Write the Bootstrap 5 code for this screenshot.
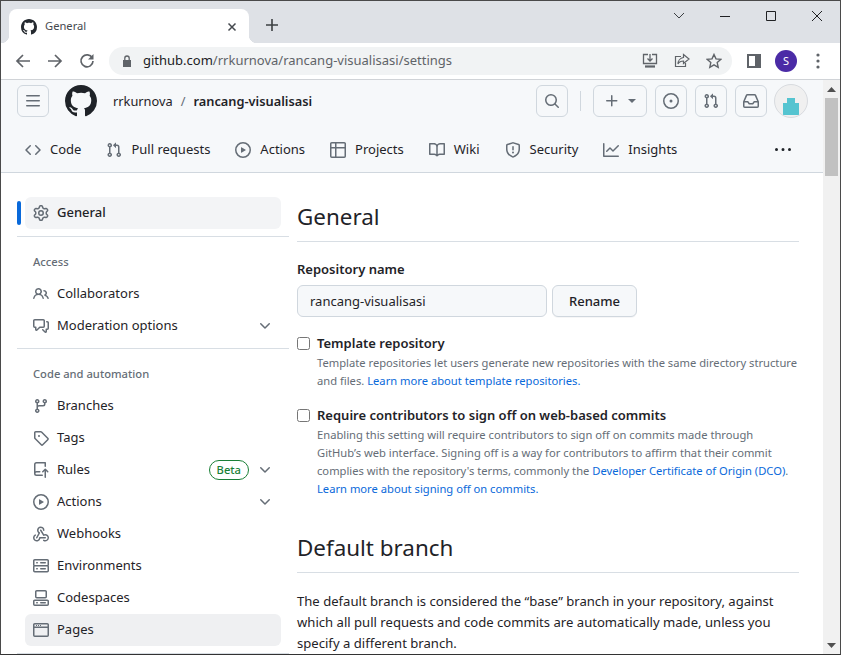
<!DOCTYPE html>
<html lang="en">
<head>
<meta charset="utf-8">
<title>General</title>
<link href="https://cdn.jsdelivr.net/npm/bootstrap@5.3.0/dist/css/bootstrap.min.css" rel="stylesheet">
<style>
html,body{height:100%;overflow:hidden;background:#fff}
body{font-family:"Noto Sans","Liberation Sans",sans-serif;font-size:13px;color:#1f2328}
svg{display:block;flex:none}
.oct{width:16px;height:16px;fill:#656d76}
.win{height:655px;display:flex;flex-direction:column;border:1px solid #4a4a4a;border-bottom-color:#333;overflow:hidden}
.strip{height:42px;background:#dee1e6;display:flex;flex:none;padding:8px 0 0 8px}
.chrome-tab{width:240px;height:34px;background:#fff;border-radius:8px 8px 0 0;display:flex;align-items:center;padding:1px 12px 0;position:relative;font-size:11.2px;color:#45494e}
.chrome-tab::before,.chrome-tab::after{content:"";position:absolute;bottom:0;width:8px;height:8px}
.chrome-tab::before{left:-8px;background:radial-gradient(circle at 0 0,#dee1e6 8px,#fff 8.5px)}
.chrome-tab::after{right:-8px;background:radial-gradient(circle at 100% 0,#dee1e6 8px,#fff 8.5px)}
.newtab{margin-left:16px;margin-top:9px}
.winctl{margin-left:auto;display:flex;align-items:flex-start;margin-top:-8px}
.winbtn{width:46px;height:30px;display:flex;align-items:center;justify-content:center}
.toolbar{height:36px;flex:none;display:flex;align-items:center;padding:0 0 0 6px}
.tb-ic{width:32px;display:flex;justify-content:center}
.omni{width:623px;height:28px;margin-left:6px;background:#f1f3f4;border-radius:14px;display:flex;align-items:center;padding-left:13px;font-size:13px;color:#5f6368}
.omni b{font-weight:400;color:#202124}
.omni-url{margin-left:11px}
.omni-r{margin-left:auto;display:flex;gap:16px;padding-right:10px}
.tb-right{display:flex;align-items:center;margin-left:15px}
.prof{width:22px;height:22px;border-radius:50%;background:#4b2ba6;color:#fff;font-size:11px;display:flex;align-items:center;justify-content:center;margin-left:14px;margin-right:19px}
.sep{height:1px;background:#d0d3d7;flex:none}
.viewport{flex:1;min-height:0;display:flex}
.page{flex:1;min-width:0;overflow:hidden}
.sbar{width:17px;flex:none;background:#f1f1f1;display:flex;flex-direction:column;align-items:center}
.sbar-up{height:18px;display:flex;align-items:center;justify-content:center}
.sbar-thumb{height:78px;width:13px;background:#c1c1c1}
.sbar-dn{margin-top:auto;height:18px;display:flex;align-items:center;justify-content:center}
.ghead{background:#f6f8fa;border-bottom:1px solid #d0d7de;height:93px;flex:none;padding:5px 15px 0 16px}
.gtop{height:32px;display:flex;align-items:center}
.hbtn{width:32px;height:32px;padding:0;border:1px solid #d0d7de;border-radius:6px;background:transparent;display:flex;align-items:center;justify-content:center}
.logo{width:32px;height:32px;fill:#1f2328;margin:0 16px}
.crumb{color:#656d76;font-size:12.8px;padding-top:1px}
.crumb-own{color:#1f2328}
.crumb-repo{font-weight:600;color:#1f2328}
.vbar{width:1px;height:20px;background:#d0d7de;margin:0 12px}
.caret{width:0;height:0;border:4px solid transparent;border-top-color:#656d76;border-bottom:0;margin-left:8px}
.avatar{width:34px;height:34px;border-radius:50%;border:1px solid #d8dbdf;background:#f0f0f0;overflow:hidden;margin-left:7px}
.gtabs{height:32px;margin-top:17px;display:flex;align-items:center}
.gtab{display:flex;align-items:center;gap:9px;color:#1f2328;text-decoration:none;padding:0 8px;margin-right:9px}
.gkebab{fill:#1f2328;margin-left:auto;margin-right:17px}
.gmain{display:flex;padding:24px 0 0 16px}
.side{width:272px;flex:none}
.side-item{height:32px;display:flex;align-items:center;gap:8px;padding:0 8px;margin-left:8px;width:256px;border-radius:6px;color:#1f2328;text-decoration:none;font-size:13px}
.side-on{background:#f3f4f6;font-weight:500;position:relative}
.side-on::before{content:"";position:absolute;left:-8px;top:4px;width:4px;height:24px;background:#0969da;border-radius:6px}
.side-hl{background:#eff0f2}
.side-chev{margin-left:auto}
.side-head{font-size:11.2px;font-weight:500;color:#656d76;height:18px;line-height:18px;padding-left:16px;margin:16px 0 7px 0}
.side-div{height:1px;background:#d8dee4;margin-top:7px}
.side-div-b{margin-top:6px}
.beta{margin-left:auto;border:1px solid #1a7f37;color:#1a7f37;background:transparent;font-weight:500;font-size:11.2px;height:20px;padding:0 7px;line-height:18px;border-radius:2em}
.content{width:502px;margin-left:8px;flex:none}
.h-sec{font-size:22.4px;font-weight:400;line-height:30px;margin:5px 0 0;padding-bottom:9px;border-bottom:1px solid #d8dee4}
.h-next{margin-top:35px}
.rlabel{font-weight:600;font-size:13px;display:block;line-height:20px;margin:17px 0 6px}
.rname{width:250px;height:32px;background:#f6f8fa;border:1px solid #d0d7de;border-radius:6px;font-size:13px;padding:0 12px;color:#1f2328}
.rbtn{width:85px;height:32px;padding:2px 0 0;background:#f6f8fa;border:1px solid #d0d7de;border-radius:6px;font-weight:500;font-size:13px;color:#1f2328;box-shadow:0 1px 0 rgba(31,35,40,.04);margin-left:5px}
.chk{display:flex;align-items:flex-start;gap:7px}
.chk input{width:13px;height:13px;margin:4px 0 0;border:1px solid #767676;border-radius:2.5px;flex:none;background:#fff}
.chk-a{margin-top:16px}
.chk-b{margin-top:15px}
.chk-t{font-weight:600;font-size:13px;line-height:20px;display:block}
.chk-d{font-size:11.2px;color:#656d76;line-height:18px;margin:1px 0 0;display:block}
.chk-d a{color:#0969da;text-decoration:none}
.pbody{font-size:13.1px;line-height:21px;margin:18px 0 0}
</style>
</head>
<body>
<div class="win">
  <div class="strip">
    <div class="chrome-tab">
      <svg class="oct me-2" viewBox="0 0 16 16"><path fill="#24292f" d="M8 0c4.42 0 8 3.58 8 8a8.013 8.013 0 0 1-5.45 7.59c-.4.08-.55-.17-.55-.38 0-.27.01-1.13.01-2.2 0-.75-.25-1.23-.54-1.48 1.78-.2 3.65-.88 3.65-3.95 0-.88-.31-1.59-.82-2.15.08-.2.36-1.02-.08-2.12 0 0-.67-.22-2.2.82-.64-.18-1.32-.27-2-.27-.68 0-1.36.09-2 .27-1.53-1.03-2.2-.82-2.2-.82-.44 1.1-.16 1.92-.08 2.12-.51.56-.82 1.28-.82 2.15 0 3.06 1.86 3.75 3.64 3.95-.23.2-.44.55-.51 1.07-.46.21-1.61.55-2.33-.66-.15-.24-.6-.83-1.23-.82-.67.01-.27.38.01.53.34.19.73.9.82 1.13.16.45.68 1.31 2.69.94 0 .67.01 1.3.01 1.49 0 .21-.15.45-.55.38A7.995 7.995 0 0 1 0 8c0-4.42 3.58-8 8-8Z"/></svg>
      <span>General</span>
      <svg class="ms-auto" width="10" height="10" viewBox="0 0 10 10" fill="none" stroke="#45494e" stroke-width="1.5"><path d="M1.5 1.5l7 7M8.5 1.5l-7 7"/></svg>
    </div>
    <svg class="newtab" width="14" height="14" viewBox="0 0 14 14" fill="none" stroke="#3c4043" stroke-width="1.6"><path d="M7 1v12M1 7h12"/></svg>
    <div class="winctl">
      <div class="winbtn"><svg width="12" height="8" viewBox="0 0 12 8" fill="none" stroke="#3c4043"><path d="M1 1l5 5 5-5"/></svg></div>
      <div class="winbtn"><svg width="10" height="1" viewBox="0 0 10 1"><path d="M0 0h10v1H0z" fill="#202124"/></svg></div>
      <div class="winbtn"><svg width="10" height="10" viewBox="0 0 10 10" fill="none" stroke="#202124"><path d="M.5.5h9v9h-9z"/></svg></div>
      <div class="winbtn"><svg width="10" height="10" viewBox="0 0 10 10" fill="none" stroke="#202124"><path d="M0 0l10 10M10 0L0 10"/></svg></div>
    </div>
  </div>
  <div class="toolbar">
    <div class="tb-ic"><svg width="16" height="16" viewBox="0 0 16 16" fill="none" stroke="#5f6368" stroke-width="1.7"><path d="M15 8H2M8 2L2 8l6 6"/></svg></div>
    <div class="tb-ic"><svg width="16" height="16" viewBox="0 0 16 16" fill="none" stroke="#5f6368" stroke-width="1.7"><path d="M1 8h13M8 2l6 6-6 6"/></svg></div>
    <div class="tb-ic"><svg width="16" height="16" viewBox="0 0 16 16" fill="none" stroke="#5f6368" stroke-width="1.7"><path d="M13.3 5A6 6 0 1 0 14 8"/><path d="M14.5 1v5.500H9z" stroke="none" fill="#5f6368"/></svg></div>
    <div class="omni">
      <svg width="10" height="12" viewBox="0 0 10 12" fill="#5f6368"><path d="M1 5h8v7H1z"/><path d="M2.8 5V3.2a2.200 2.200 0 0 1 4.400 0V5" fill="none" stroke="#5f6368" stroke-width="1.3"/></svg>
      <span class="omni-url"><b>github.com</b>/rrkurnova/rancang-visualisasi/settings</span>
      <div class="omni-r">
        <svg width="16" height="16" viewBox="0 0 16 16" fill="none" stroke="#5f6368" stroke-width="1.3"><path d="M6 1.500H1.500v9h13v-9H10"/><path d="M8 1v7M5.500 5.500L8 8l2.500-2.500"/><path d="M3 13.500h10" stroke-width="2.2"/></svg>
        <svg width="16" height="16" viewBox="0 0 16 16" fill="none" stroke="#5f6368" stroke-width="1.2"><path d="M7 3.500H1.500v10h10V10"/><path d="M9.500 1.500L15 6l-5.500 4.500V8C7 8 5 9 4 11c0-3 2-6 5.500-6.500z"/></svg>
        <svg width="16" height="16" viewBox="0 0 16 16" fill="none" stroke="#5f6368" stroke-width="1.4"><path d="M8 1.500l2 4.400 4.700.5-3.500 3.200 1 4.700L8 11.900l-4.200 2.400 1-4.700L1.300 6.400 6 5.900z"/></svg>
      </div>
    </div>
    <div class="tb-right">
      <svg width="14" height="14" viewBox="0 0 14 14"><path d="M0 0h14v14H0z" fill="#5f6368"/><path d="M2 2h6v10H2z" fill="#fff"/></svg>
      <div class="prof">S</div>
      <svg width="4" height="16" viewBox="0 0 4 16" fill="#5f6368"><circle cx="2" cy="2" r="1.6"/><circle cx="2" cy="8" r="1.6"/><circle cx="2" cy="14" r="1.6"/></svg>
    </div>
  </div>
  <div class="sep"></div>
  <div class="viewport">
    <div class="page">
      <header class="ghead">
        <div class="gtop">
          <button class="hbtn" type="button"><svg class="oct" viewBox="0 0 16 16"><path d="M1 2.750A.75.75 0 0 1 1.750 2h12.500a.75.75 0 0 1 0 1.500H1.750A.75.75 0 0 1 1 2.750Zm0 5A.75.75 0 0 1 1.750 7h12.500a.75.75 0 0 1 0 1.500H1.750A.75.75 0 0 1 1 7.750ZM1.750 12h12.500a.75.75 0 0 1 0 1.500H1.750a.75.75 0 0 1 0-1.500Z"/></svg></button>
          <svg class="logo" viewBox="0 0 16 16"><path d="M8 0c4.420 0 8 3.580 8 8a8.013 8.013 0 0 1-5.450 7.590c-.4.08-.55-.17-.55-.38 0-.27.01-1.130.01-2.200 0-.75-.25-1.230-.54-1.480 1.780-.2 3.650-.88 3.650-3.950 0-.88-.31-1.590-.82-2.150.08-.2.36-1.020-.08-2.120 0 0-.67-.22-2.200.82-.64-.18-1.320-.27-2-.27-.68 0-1.360.09-2 .27-1.530-1.030-2.200-.82-2.200-.82-.44 1.100-.16 1.920-.08 2.120-.51.56-.82 1.280-.82 2.150 0 3.060 1.860 3.750 3.640 3.950-.23.2-.44.55-.51 1.070-.46.21-1.610.55-2.330-.66-.15-.24-.6-.83-1.230-.82-.67.01-.27.38.01.53.34.19.73.9.82 1.130.16.45.68 1.310 2.690.94 0 .67.01 1.300.01 1.490 0 .21-.15.45-.55.38A7.995 7.995 0 0 1 0 8c0-4.420 3.580-8 8-8Z"/></svg>
          <span class="crumb crumb-own">rrkurnova</span><span class="crumb mx-2">/</span><span class="crumb crumb-repo">rancang-visualisasi</span>
          <button class="hbtn ms-auto" type="button"><svg class="oct" viewBox="0 0 16 16"><path d="M10.680 11.740a6 6 0 0 1-7.922-8.982 6 6 0 0 1 8.982 7.922l3.040 3.040a.749.749 0 0 1-.326 1.275.749.749 0 0 1-.734-.215ZM11.500 7a4.499 4.499 0 1 0-8.997 0A4.499 4.499 0 0 0 11.500 7Z"/></svg></button>
          <div class="vbar"></div>
          <button class="hbtn" style="width:54px" type="button"><svg class="oct" viewBox="0 0 16 16"><path d="M7.750 2a.75.75 0 0 1 .75.75V7h4.250a.75.75 0 0 1 0 1.500H8.500v4.250a.75.75 0 0 1-1.500 0V8.500H2.750a.75.75 0 0 1 0-1.500H7V2.750A.75.75 0 0 1 7.750 2Z"/></svg><span class="caret"></span></button>
          <button class="hbtn ms-2" type="button"><svg class="oct" viewBox="0 0 16 16"><path d="M8 9.500a1.500 1.500 0 1 0 0-3 1.500 1.500 0 0 0 0 3Z"/><path d="M8 0a8 8 0 1 1 0 16A8 8 0 0 1 8 0ZM1.500 8a6.500 6.500 0 1 0 13 0 6.500 6.500 0 0 0-13 0Z"/></svg></button>
          <button class="hbtn ms-2" type="button"><svg class="oct" viewBox="0 0 16 16"><path d="M1.500 3.250a2.250 2.250 0 1 1 3 2.122v5.256a2.251 2.251 0 1 1-1.500 0V5.372A2.250 2.250 0 0 1 1.500 3.250Zm5.677-.177L9.573.677A.25.25 0 0 1 10 .854V2.500h1A2.500 2.500 0 0 1 13.500 5v5.628a2.251 2.251 0 1 1-1.500 0V5a1 1 0 0 0-1-1h-1v1.646a.25.25 0 0 1-.427.177L7.177 3.427a.25.25 0 0 1 0-.354ZM3.750 2.500a.75.75 0 1 0 0 1.500.75.75 0 0 0 0-1.500Zm0 9.500a.75.75 0 1 0 0 1.500.75.75 0 0 0 0-1.500Zm8.250.75a.75.75 0 1 0 1.500 0 .75.75 0 0 0-1.500 0Z"/></svg></button>
          <button class="hbtn ms-2" type="button"><svg class="oct" viewBox="0 0 16 16"><path d="M2.800 2.060A1.750 1.750 0 0 1 4.410 1h7.180c.7 0 1.333.417 1.610 1.060l2.740 6.395c.04.093.06.194.06.295v4.500A1.750 1.750 0 0 1 14.250 15H1.750A1.750 1.750 0 0 1 0 13.250v-4.500c0-.101.02-.202.06-.295Zm1.610.44a.25.25 0 0 0-.23.152L1.887 8H4.750a.75.75 0 0 1 .6.3L6.625 10h2.750l1.275-1.700a.75.75 0 0 1 .6-.3h2.863L11.820 2.652a.25.25 0 0 0-.23-.152Zm10.090 7h-2.875l-1.275 1.700a.75.75 0 0 1-.6.3h-3.500a.75.75 0 0 1-.6-.3L4.375 9.500H1.500v3.750c0 .138.112.25.25.25h12.500a.25.25 0 0 0 .25-.25Z"/></svg></button>
          <div class="avatar"><svg width="32" height="32" viewBox="0 0 32 32"><path d="M12 13h8v5h4v12H8V18h4z" fill="#55c4d0"/></svg></div>
        </div>
        <nav class="gtabs">
          <a class="gtab" href="#"><svg class="oct" viewBox="0 0 16 16"><path d="m11.280 3.220 4.250 4.250a.75.75 0 0 1 0 1.060l-4.250 4.250a.749.749 0 0 1-1.275-.326.749.749 0 0 1 .215-.734L13.940 8l-3.720-3.720a.749.749 0 0 1 .326-1.275.749.749 0 0 1 .734.215Zm-6.560 0a.751.751 0 0 1 1.042.018.751.751 0 0 1 .018 1.042L2.060 8l3.720 3.720a.749.749 0 0 1-.326 1.275.749.749 0 0 1-.734-.215L.47 8.530a.75.75 0 0 1 0-1.060Z"/></svg>Code</a>
          <a class="gtab" href="#"><svg class="oct" viewBox="0 0 16 16"><path d="M1.500 3.250a2.250 2.250 0 1 1 3 2.122v5.256a2.251 2.251 0 1 1-1.500 0V5.372A2.250 2.250 0 0 1 1.500 3.250Zm5.677-.177L9.573.677A.25.25 0 0 1 10 .854V2.500h1A2.500 2.500 0 0 1 13.500 5v5.628a2.251 2.251 0 1 1-1.500 0V5a1 1 0 0 0-1-1h-1v1.646a.25.25 0 0 1-.427.177L7.177 3.427a.25.25 0 0 1 0-.354ZM3.750 2.500a.75.75 0 1 0 0 1.500.75.75 0 0 0 0-1.500Zm0 9.500a.75.75 0 1 0 0 1.500.75.75 0 0 0 0-1.500Zm8.250.75a.75.75 0 1 0 1.500 0 .75.75 0 0 0-1.500 0Z"/></svg>Pull requests</a>
          <a class="gtab" href="#"><svg class="oct" viewBox="0 0 16 16"><path d="M8 0a8 8 0 1 1 0 16A8 8 0 0 1 8 0ZM1.500 8a6.500 6.500 0 1 0 13 0 6.500 6.500 0 0 0-13 0Zm4.879-2.773 4.264 2.559a.25.25 0 0 1 0 .428l-4.264 2.559A.25.25 0 0 1 6 10.559V5.442a.25.25 0 0 1 .379-.215Z"/></svg>Actions</a>
          <a class="gtab" href="#"><svg class="oct" viewBox="0 0 16 16"><path d="M0 1.750C0 .784.784 0 1.750 0h12.500C15.216 0 16 .784 16 1.750v12.500A1.750 1.750 0 0 1 14.250 16H1.750A1.750 1.750 0 0 1 0 14.250ZM6.500 6.500v8h7.750a.25.25 0 0 0 .25-.25V6.500Zm8-1.500V1.750a.25.25 0 0 0-.25-.25H6.500V5Zm-13 1.500v7.750c0 .138.112.25.25.25H5v-8ZM5 5V1.500H1.750a.25.25 0 0 0-.25.25V5Z"/></svg>Projects</a>
          <a class="gtab" href="#"><svg class="oct" viewBox="0 0 16 16"><path d="M0 1.750A.75.75 0 0 1 .75 1h4.253c1.227 0 2.317.59 3 1.501A3.743 3.743 0 0 1 11.006 1h4.245a.75.75 0 0 1 .75.75v10.500a.75.75 0 0 1-.75.75h-4.507a2.250 2.250 0 0 0-1.591.659l-.622.621a.75.75 0 0 1-1.060 0l-.622-.621A2.250 2.250 0 0 0 5.258 13H.75a.75.75 0 0 1-.75-.75Zm7.251 10.324.004-5.073-.002-2.253A2.250 2.250 0 0 0 5.003 2.500H1.500v9h3.757a3.750 3.750 0 0 1 1.994.574ZM8.755 4.750l-.004 7.322a3.752 3.752 0 0 1 1.992-.572H14.500v-9h-3.495a2.250 2.250 0 0 0-2.250 2.250Z"/></svg>Wiki</a>
          <a class="gtab" href="#"><svg class="oct" viewBox="0 0 16 16"><path d="M7.467.133a1.748 1.748 0 0 1 1.066 0l5.250 1.680A1.750 1.750 0 0 1 15 3.480V7c0 1.566-.32 3.182-1.303 4.682-.983 1.498-2.585 2.813-5.032 3.855a1.697 1.697 0 0 1-1.330 0c-2.447-1.042-4.049-2.357-5.032-3.855C1.320 10.182 1 8.566 1 7V3.480a1.750 1.750 0 0 1 1.217-1.667Zm.61 1.429a.25.25 0 0 0-.153 0l-5.250 1.680a.25.25 0 0 0-.174.238V7c0 1.358.275 2.666 1.057 3.860.784 1.194 2.121 2.340 4.366 3.297a.196.196 0 0 0 .154 0c2.245-.956 3.582-2.104 4.366-3.298C13.225 9.666 13.500 8.360 13.500 7V3.480a.251.251 0 0 0-.174-.237l-5.250-1.680ZM8.750 4.750v3a.75.75 0 0 1-1.500 0v-3a.75.75 0 0 1 1.500 0ZM9 10.500a1 1 0 1 1-2 0 1 1 0 0 1 2 0Z"/></svg>Security</a>
          <a class="gtab" href="#"><svg class="oct" viewBox="0 0 16 16"><path d="M1.500 1.750V13.500h13.750a.75.75 0 0 1 0 1.500H.75a.75.75 0 0 1-.75-.75V1.750a.75.75 0 0 1 1.500 0Zm14.280 2.530-5.250 5.250a.75.75 0 0 1-1.060 0L7 7.060 4.280 9.780a.751.751 0 0 1-1.042-.018.751.751 0 0 1-.018-1.042l3.250-3.250a.75.75 0 0 1 1.060 0L10 7.940l4.720-4.720a.751.751 0 0 1 1.042.018.751.751 0 0 1 .018 1.042Z"/></svg>Insights</a>
          <svg class="oct gkebab" viewBox="0 0 16 16"><path d="M8 9a1.500 1.500 0 1 0 0-3 1.500 1.500 0 0 0 0 3ZM1.500 9a1.500 1.500 0 1 0 0-3 1.500 1.500 0 0 0 0 3Zm13 0a1.500 1.500 0 1 0 0-3 1.500 1.500 0 0 0 0 3Z"/></svg>
        </nav>
      </header>
      <div class="gmain">
        <aside class="side">
          <a class="side-item side-on" href="#"><svg class="oct" viewBox="0 0 16 16"><path d="M8 0a8.200 8.200 0 0 1 .701.031C9.444.095 9.990.645 10.160 1.290l.288 1.107c.018.066.079.158.212.224.231.114.454.243.668.386.123.082.233.09.299.071l1.103-.303c.644-.176 1.392.021 1.820.63.27.385.506.792.704 1.218.315.675.111 1.422-.364 1.891l-.814.806c-.049.048-.098.147-.088.294.016.257.016.515 0 .772-.01.147.038.246.088.294l.814.806c.475.469.679 1.216.364 1.891a7.977 7.977 0 0 1-.704 1.217c-.428.61-1.176.807-1.820.63l-1.102-.302c-.067-.019-.177-.011-.3.071a5.909 5.909 0 0 1-.668.386c-.133.066-.194.158-.211.224l-.29 1.106c-.168.646-.715 1.196-1.458 1.260a8.006 8.006 0 0 1-1.402 0c-.743-.064-1.289-.614-1.458-1.260l-.289-1.106c-.018-.066-.079-.158-.212-.224a5.738 5.738 0 0 1-.668-.386c-.123-.082-.233-.09-.299-.071l-1.103.303c-.644.176-1.392-.021-1.820-.63a8.120 8.120 0 0 1-.704-1.218c-.315-.675-.111-1.422.363-1.891l.815-.806c.05-.048.098-.147.088-.294a6.214 6.214 0 0 1 0-.772c.01-.147-.038-.246-.088-.294l-.815-.806C.635 6.045.431 5.298.746 4.623a7.920 7.920 0 0 1 .704-1.217c.428-.61 1.176-.807 1.820-.63l1.102.302c.067.019.177.011.3-.071.214-.143.437-.272.668-.386.133-.066.194-.158.211-.224l.29-1.106C6.009.645 6.556.095 7.299.03 7.530.01 7.764 0 8 0Zm-.571 1.525c-.036.003-.108.036-.137.146l-.289 1.105c-.147.561-.549.967-.998 1.189-.173.086-.34.183-.5.29-.417.278-.97.423-1.529.27l-1.103-.303c-.109-.03-.175.016-.195.045-.22.312-.412.644-.573.99-.014.031-.021.11.059.19l.815.806c.411.406.562.957.53 1.456a4.709 4.709 0 0 0 0 .582c.032.499-.119 1.050-.53 1.456l-.815.806c-.081.08-.073.159-.059.19.162.346.353.677.573.989.02.03.085.076.195.046l1.102-.303c.56-.153 1.113-.008 1.530.27.161.107.328.204.501.29.447.222.85.629.997 1.189l.289 1.105c.029.109.101.143.137.146a6.600 6.600 0 0 0 1.142 0c.036-.003.108-.036.137-.146l.289-1.105c.147-.561.549-.967.998-1.189.173-.086.34-.183.5-.29.417-.278.97-.423 1.529-.27l1.103.303c.109.029.175-.016.195-.045.22-.313.411-.644.573-.99.014-.031.021-.11-.059-.19l-.815-.806c-.411-.406-.562-.957-.53-1.456a4.709 4.709 0 0 0 0-.582c-.032-.499.119-1.050.53-1.456l.815-.806c.081-.08.073-.159.059-.19a6.464 6.464 0 0 0-.573-.989c-.02-.03-.085-.076-.195-.046l-1.102.303c-.56.153-1.113.008-1.530-.27a4.440 4.440 0 0 0-.501-.29c-.447-.222-.85-.629-.997-1.189l-.289-1.105c-.029-.11-.101-.143-.137-.146a6.600 6.600 0 0 0-1.142 0ZM11 8a3 3 0 1 1-6 0 3 3 0 0 1 6 0ZM9.500 8a1.500 1.500 0 1 0-3.001.001A1.500 1.500 0 0 0 9.500 8Z"/></svg>General</a>
          <div class="side-div"></div>
          <div class="side-head">Access</div>
          <a class="side-item" href="#"><svg class="oct" viewBox="0 0 16 16"><path d="M2 5.500a3.500 3.500 0 1 1 5.898 2.549 5.508 5.508 0 0 1 3.034 4.084.75.75 0 1 1-1.482.235 4 4 0 0 0-7.900 0 .75.75 0 0 1-1.482-.236A5.507 5.507 0 0 1 3.102 8.050 3.493 3.493 0 0 1 2 5.500ZM11 4a3.001 3.001 0 0 1 2.220 5.018 5.010 5.010 0 0 1 2.560 3.012.749.749 0 0 1-.885.954.752.752 0 0 1-.549-.514 3.507 3.507 0 0 0-2.522-2.372.75.75 0 0 1-.574-.73v-.352a.75.75 0 0 1 .416-.672A1.500 1.500 0 0 0 11 5.500.75.75 0 0 1 11 4Zm-5.500-.5a2 2 0 1 0-.001 3.999A2 2 0 0 0 5.500 3.500Z"/></svg>Collaborators</a>
          <a class="side-item" href="#"><svg class="oct" viewBox="0 0 16 16"><path d="M1.750 1h8.500c.966 0 1.750.784 1.750 1.750v5.500A1.750 1.750 0 0 1 10.250 10H7.061l-2.574 2.573A1.458 1.458 0 0 1 2 11.543V10h-.25A1.750 1.750 0 0 1 0 8.250v-5.500C0 1.784.784 1 1.750 1ZM1.500 2.750v5.500c0 .138.112.25.25.25h1a.75.75 0 0 1 .75.75v2.190l2.720-2.720a.749.749 0 0 1 .53-.22h3.500a.25.25 0 0 0 .25-.25v-5.500a.25.25 0 0 0-.25-.25h-8.500a.25.25 0 0 0-.25.25Zm13 2a.25.25 0 0 0-.25-.25h-.5a.75.75 0 0 1 0-1.500h.5c.966 0 1.750.784 1.750 1.750v5.500A1.750 1.750 0 0 1 14.250 12H14v1.543a1.458 1.458 0 0 1-2.487 1.030L9.220 12.280a.749.749 0 0 1 .326-1.275.749.749 0 0 1 .734.215l2.220 2.220v-2.190a.75.75 0 0 1 .75-.75h1a.25.25 0 0 0 .25-.25Z"/></svg>Moderation options<svg class="oct side-chev" viewBox="0 0 16 16"><path d="M12.780 5.220a.749.749 0 0 1 0 1.060l-4.250 4.250a.749.749 0 0 1-1.060 0L3.220 6.280a.749.749 0 1 1 1.060-1.060L8 8.939l3.720-3.719a.749.749 0 0 1 1.060 0Z"/></svg></a>
          <div class="side-div side-div-b"></div>
          <div class="side-head">Code and automation</div>
          <a class="side-item" href="#"><svg class="oct" viewBox="0 0 16 16"><path d="M9.500 3.250a2.250 2.250 0 1 1 3 2.122V6A2.500 2.500 0 0 1 10 8.500H6a1 1 0 0 0-1 1v1.128a2.251 2.251 0 1 1-1.500 0V5.372a2.250 2.250 0 1 1 1.500 0v1.836A2.493 2.493 0 0 1 6 7h4a1 1 0 0 0 1-1v-.628A2.250 2.250 0 0 1 9.500 3.250Zm-6 0a.75.75 0 1 0 1.500 0 .75.75 0 0 0-1.500 0Zm8.250-.75a.75.75 0 1 0 0 1.500.75.75 0 0 0 0-1.500ZM4.250 12a.75.75 0 1 0 0 1.500.75.75 0 0 0 0-1.500Z"/></svg>Branches</a>
          <a class="side-item" href="#"><svg class="oct" viewBox="0 0 16 16"><path d="M1 7.775V2.750C1 1.784 1.784 1 2.750 1h5.025c.464 0 .91.184 1.238.513l6.250 6.250a1.750 1.750 0 0 1 0 2.474l-5.026 5.026a1.750 1.750 0 0 1-2.474 0l-6.250-6.250A1.752 1.752 0 0 1 1 7.775Zm1.500 0c0 .066.026.13.073.177l6.250 6.250a.25.25 0 0 0 .354 0l5.025-5.025a.25.25 0 0 0 0-.354l-6.250-6.250a.25.25 0 0 0-.177-.073H2.750a.25.25 0 0 0-.25.25ZM6 5a1 1 0 1 1 0 2 1 1 0 0 1 0-2Z"/></svg>Tags</a>
          <a class="side-item" href="#"><svg class="oct" viewBox="0 0 16 16"><path d="M1 2.500A2.500 2.500 0 0 1 3.500 0h8.750a.75.75 0 0 1 .75.75v3.500a.75.75 0 0 1-1.500 0V1.500h-8a1 1 0 0 0-1 1v6.708A2.493 2.493 0 0 1 3.500 9h3.250a.75.75 0 0 1 0 1.500H3.500a1 1 0 0 0 0 2h5.750a.75.75 0 0 1 0 1.500H3.500A2.500 2.500 0 0 1 1 11.500Zm13.230 7.790h-.001l-1.224-1.224v6.184a.75.75 0 0 1-1.500 0V9.066L10.280 10.290a.75.75 0 0 1-1.060-1.061l2.505-2.504a.75.75 0 0 1 1.060 0L15.290 9.230a.751.751 0 0 1-.018 1.042.751.751 0 0 1-1.042.018Z"/></svg>Rules<span class="badge beta">Beta</span><svg class="oct" viewBox="0 0 16 16"><path d="M12.780 5.220a.749.749 0 0 1 0 1.060l-4.250 4.250a.749.749 0 0 1-1.060 0L3.220 6.280a.749.749 0 1 1 1.060-1.060L8 8.939l3.720-3.719a.749.749 0 0 1 1.060 0Z"/></svg></a>
          <a class="side-item" href="#"><svg class="oct" viewBox="0 0 16 16"><path d="M8 0a8 8 0 1 1 0 16A8 8 0 0 1 8 0ZM1.500 8a6.500 6.500 0 1 0 13 0 6.500 6.500 0 0 0-13 0Zm4.879-2.773 4.264 2.559a.25.25 0 0 1 0 .428l-4.264 2.559A.25.25 0 0 1 6 10.559V5.442a.25.25 0 0 1 .379-.215Z"/></svg>Actions<svg class="oct side-chev" viewBox="0 0 16 16"><path d="M12.780 5.220a.749.749 0 0 1 0 1.060l-4.250 4.250a.749.749 0 0 1-1.060 0L3.220 6.280a.749.749 0 1 1 1.060-1.060L8 8.939l3.720-3.719a.749.749 0 0 1 1.060 0Z"/></svg></a>
          <a class="side-item" href="#"><svg class="oct" viewBox="0 0 16 16"><path d="M5.500 4.250a2.250 2.250 0 0 1 4.500 0 .75.75 0 0 0 1.500 0 3.750 3.750 0 1 0-6.140 2.889l-2.272 4.258a.75.75 0 0 0 1.324.706L7 7.250a.75.75 0 0 0-.309-1.015A2.250 2.250 0 0 1 5.500 4.250Z"/><path d="M7.364 3.607a.75.75 0 0 1 1.030.257l2.608 4.349a3.750 3.750 0 1 1-.628 6.785.75.75 0 0 1 .752-1.299 2.250 2.250 0 1 0-.033-3.880.75.75 0 0 1-1.030-.256L7.107 4.636a.75.75 0 0 1 .257-1.030Z"/><path d="M2.900 8.776A.75.75 0 0 1 2.625 9.800 2.250 2.250 0 1 0 6 11.750a.75.75 0 0 1 .75-.751h5.500a.75.75 0 0 1 0 1.500H7.425a3.751 3.751 0 1 1-5.550-3.998.75.75 0 0 1 1.024.274Z"/></svg>Webhooks</a>
          <a class="side-item" href="#"><svg class="oct" viewBox="0 0 16 16"><path d="M1.750 1h12.500c.966 0 1.750.784 1.750 1.750v4c0 .372-.116.717-.314 1 .198.283.314.628.314 1v4a1.750 1.750 0 0 1-1.750 1.750H1.750A1.750 1.750 0 0 1 0 12.750v-4c0-.372.116-.717.314-1a1.739 1.739 0 0 1-.314-1v-4C0 1.784.784 1 1.750 1ZM1.500 2.750v4c0 .138.112.25.25.25h12.500a.25.25 0 0 0 .25-.25v-4a.25.25 0 0 0-.25-.25H1.750a.25.25 0 0 0-.25.25Zm.25 5.750a.25.25 0 0 0-.25.25v4c0 .138.112.25.25.25h12.500a.25.25 0 0 0 .25-.25v-4a.25.25 0 0 0-.25-.25ZM7 4.750A.75.75 0 0 1 7.750 4h4.500a.75.75 0 0 1 0 1.500h-4.500A.75.75 0 0 1 7 4.750ZM7.750 10h4.500a.75.75 0 0 1 0 1.500h-4.500a.75.75 0 0 1 0-1.500ZM3 4.750A.75.75 0 0 1 3.750 4h.5a.75.75 0 0 1 0 1.500h-.5A.75.75 0 0 1 3 4.750ZM3.750 10h.5a.75.75 0 0 1 0 1.500h-.5a.75.75 0 0 1 0-1.500Z"/></svg>Environments</a>
          <a class="side-item" href="#"><svg class="oct" viewBox="0 0 16 16"><path d="M0 11.250c0-.966.784-1.750 1.750-1.750h12.500c.966 0 1.750.784 1.750 1.750v3A1.750 1.750 0 0 1 14.250 16H1.750A1.750 1.750 0 0 1 0 14.250Zm2-9.500C2 .784 2.784 0 3.750 0h8.500C13.216 0 14 .784 14 1.750v5a1.750 1.750 0 0 1-1.750 1.750h-8.500A1.750 1.750 0 0 1 2 6.750Zm1.750-.25a.25.25 0 0 0-.25.25v5c0 .138.112.25.25.25h8.500a.25.25 0 0 0 .25-.25v-5a.25.25 0 0 0-.25-.25Zm-2 9.500a.25.25 0 0 0-.25.25v3c0 .138.112.25.25.25h12.500a.25.25 0 0 0 .25-.25v-3a.25.25 0 0 0-.25-.25Z"/><path d="M7 12.750a.75.75 0 0 1 .75-.75h4.500a.75.75 0 0 1 0 1.500h-4.500a.75.75 0 0 1-.75-.75Zm-4 0a.75.75 0 0 1 .75-.75h.5a.75.75 0 0 1 0 1.500h-.5a.75.75 0 0 1-.75-.75Z"/></svg>Codespaces</a>
          <a class="side-item side-hl" href="#"><svg class="oct" viewBox="0 0 16 16"><path d="M0 2.750C0 1.784.784 1 1.750 1h12.500c.966 0 1.750.784 1.750 1.750v10.500A1.750 1.750 0 0 1 14.250 15H1.750A1.750 1.750 0 0 1 0 13.250ZM14.500 6h-13v7.250c0 .138.112.25.25.25h12.500a.25.25 0 0 0 .25-.25Zm-13-1.500h13V2.750a.25.25 0 0 0-.25-.25H1.750a.25.25 0 0 0-.25.25Z"/><path d="M3 3h1v1H3zM5 3h1v1H5zM7 3h1v1H7z"/></svg>Pages</a>
          <div class="side-div"></div>
        </aside>
        <main class="content">
          <h2 class="h-sec">General</h2>
          <label class="rlabel" for="rn">Repository name</label>
          <div class="d-flex">
            <input id="rn" class="rname" type="text" value="rancang-visualisasi">
            <button class="rbtn" type="button">Rename</button>
          </div>
          <label class="chk chk-a"><input type="checkbox"><span><span class="chk-t">Template repository</span><span class="chk-d">Template repositories let users generate new repositories with the same directory structure and files. <a href="#">Learn more about template repositories.</a></span></span></label>
          <label class="chk chk-b"><input type="checkbox"><span><span class="chk-t">Require contributors to sign off on web-based commits</span><span class="chk-d">Enabling this setting will require contributors to sign off on commits made through GitHub’s web interface. Signing off is a way for contributors to affirm that their commit complies with the repository's terms, commonly the <a href="#">Developer Certificate of Origin (DCO)</a>. <a href="#">Learn more about signing off on commits.</a></span></span></label>
          <h2 class="h-sec h-next">Default branch</h2>
          <p class="pbody">The default branch is considered the “base” branch in your repository, against which all pull requests and code commits are automatically made, unless you specify a different branch.</p>
        </main>
      </div>
    </div>
    <div class="sbar">
      <div class="sbar-up"><svg width="9" height="5" viewBox="0 0 9 5"><path d="M4.5 0L9 5H0z" fill="#505050"/></svg></div>
      <div class="sbar-thumb"></div>
      <div class="sbar-dn"><svg width="9" height="5" viewBox="0 0 9 5"><path d="M0 0h9L4.5 5z" fill="#505050"/></svg></div>
    </div>
  </div>
</div>
</body>
</html>
